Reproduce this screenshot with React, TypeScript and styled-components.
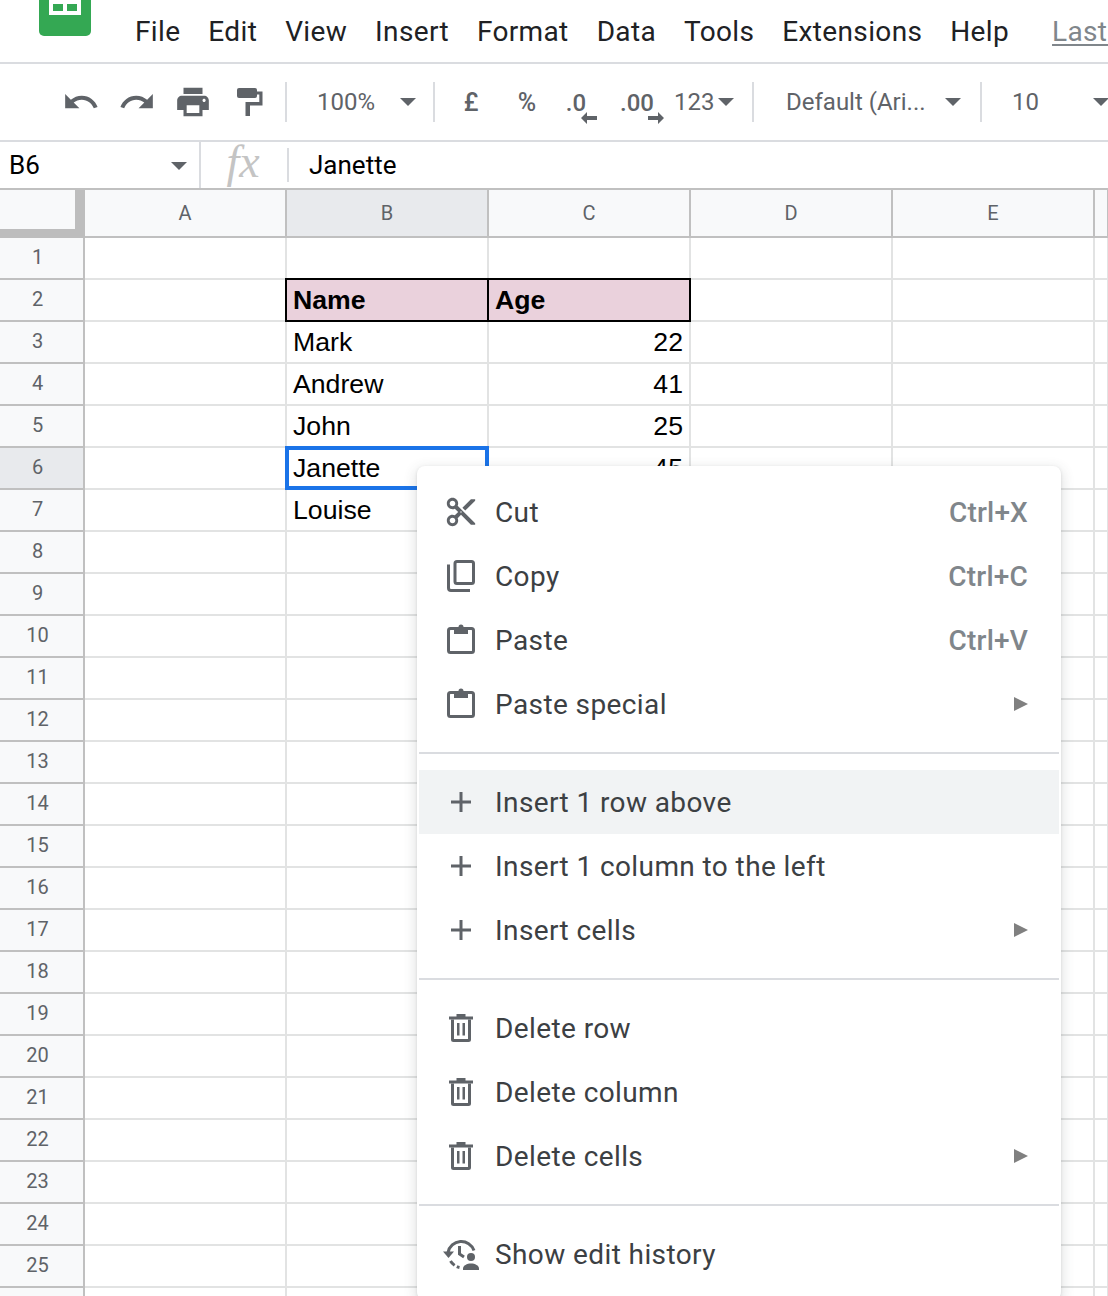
import React from "react";
import styled, { createGlobalStyle } from "styled-components";

const GlobalStyle = createGlobalStyle`
   html, body { margin: 0; padding: 0; background: #fff; }
   body { font-family: Roboto, "Liberation Sans", sans-serif; }
`;

const ICON = "#5f6368";
const GRID_LINE = "#e2e3e3";
const HEAD_LINE = "#c0c0c0";

const Page = styled.div`
   width: 1108px;
   height: 1296px;
   position: relative;
   overflow: hidden;
   background: #fff;
`;

/* top menu bar */
const MenuBar = styled.div`
   height: 62px;
   display: flex;
   align-items: flex-start;
   padding-left: 39px;
   border-bottom: 2px solid #dadce0;
   white-space: nowrap;
`;

const Logo = styled.svg`
   width: 52px;
   height: 36px;
   flex: none;
   margin-right: 44px;
`;

const MenuLabels = styled.div`
   display: flex;
   gap: 28px;
   padding-top: 15px;
`;

const MenuLabel = styled.span`
   font-size: 28px;
   line-height: 34px;
   letter-spacing: 0.35px;
   color: #202124;
`;

const LastEdit = styled(MenuLabel)`
   color: #80868b;
   text-decoration: underline;
   text-underline-offset: 3px;
   margin-left: 15px;
`;

/* toolbar */
const Toolbar = styled.div`
   height: 76px;
   display: flex;
   align-items: center;
   padding-left: 52px;
   border-bottom: 2px solid #dadce0;
   white-space: nowrap;
   color: ${ICON};
   font-size: 24px;
`;

const ToolButton = styled.div<{ $w: number; $strong?: boolean }>`
   width: ${({ $w }) => $w}px;
   height: 40px;
   flex: none;
   display: flex;
   align-items: center;
   justify-content: center;
   ${({ $strong }) => $strong && "font-weight: 500; font-size: 25px;"}
`;

const ToolSep = styled.div<{ $first?: boolean }>`
   width: 2px;
   height: 40px;
   flex: none;
   background: #dadce0;
   margin-left: ${({ $first }) => ($first ? "6px" : "0")};
`;

const Dropdown = styled.div<{ $w: number; $pad: number; $gap: number }>`
   width: ${({ $w }) => $w}px;
   flex: none;
   display: flex;
   align-items: center;
   justify-content: space-between;
   box-sizing: border-box;
   padding: 0 ${({ $gap }) => $gap}px 0 ${({ $pad }) => $pad}px;
   line-height: 26px;
   margin-top: -1px;
`;

const Caret = styled.span`
   width: 0;
   height: 0;
   flex: none;
   margin-top: 1px;
   border-left: 8px solid transparent;
   border-right: 8px solid transparent;
   border-top: 8px solid ${ICON};
`;

const Decimal = styled.div`
   display: flex;
   flex-direction: column;
   font-weight: 500;
   line-height: 26px;
   padding-top: 10px;
`;

const DecimalArrow = styled.svg<{ $side: "left" | "right" }>`
   width: 16px;
   height: 12px;
   margin-top: -4px;
   align-self: flex-end;
   margin-right: ${({ $side }) => ($side === "left" ? "-11px" : "-10px")};
`;

/* formula bar */
const FormulaBar = styled.div`
   height: 46px;
   display: flex;
   align-items: center;
   white-space: nowrap;
   font-size: 26px;
   color: #000;
`;

const NameBox = styled.div`
   width: 201px;
   height: 46px;
   flex: none;
   box-sizing: border-box;
   padding: 0 12px 0 9px;
   display: flex;
   align-items: center;
   justify-content: space-between;
   border-right: 2px solid #dadce0;
`;

const FxLabel = styled.div`
   width: 86px;
   flex: none;
   box-sizing: border-box;
   padding: 0 2px 6px 0;
   text-align: center;
   font-family: "Liberation Serif", serif;
   font-style: italic;
   font-size: 46px;
   line-height: 40px;
   color: #c4c4c4;
`;

const FormulaSep = styled.div`
   width: 2px;
   height: 34px;
   flex: none;
   background: #dadce0;
   margin-right: 20px;
`;

/* sheet */
const Sheet = styled.div`
   display: grid;
   grid-template-columns: 85px repeat(5, 202px) 1fr;
   grid-template-rows: 48px;
   grid-auto-rows: 42px;
   border-top: 2px solid ${HEAD_LINE};
`;

const Corner = styled.div`
   background: #f8f9fa;
   border-right: 10px solid #bdbdbd;
   border-bottom: 9px solid #bdbdbd;
`;

const ColHead = styled.div<{ $active?: boolean }>`
   display: flex;
   align-items: center;
   justify-content: center;
   background: ${({ $active }) => ($active ? "#e8eaed" : "#f8f9fa")};
   border-right: 2px solid ${HEAD_LINE};
   border-bottom: 2px solid ${HEAD_LINE};
   font-size: 20px;
   color: ${ICON};
`;

const RowHead = styled.div<{ $active?: boolean }>`
   display: flex;
   align-items: center;
   justify-content: center;
   padding: 0 8px 2px 0;
   background: ${({ $active }) => ($active ? "#e8eaed" : "#f8f9fa")};
   border-right: 2px solid ${HEAD_LINE};
   border-bottom: 2px solid ${HEAD_LINE};
   font-size: 20px;
   color: ${ICON};
`;

const Cell = styled.div<{
   $right?: boolean;
   $head?: boolean;
   $selected?: boolean;
}>`
   position: relative;
   display: flex;
   align-items: flex-end;
   justify-content: ${({ $right }) => ($right ? "flex-end" : "flex-start")};
   padding: 0 6px 5px;
   overflow: visible;
   white-space: nowrap;
   background: ${({ $head }) => ($head ? "#ead1dc" : "#fff")};
   border-right: 2px solid ${GRID_LINE};
   border-bottom: 2px solid ${GRID_LINE};
   font-family: "Liberation Sans", Arial, sans-serif;
   font-size: 26.67px;
   line-height: 30px;
   font-weight: ${({ $head }) => ($head ? 700 : 400)};
   color: #000;

   ${({ $head }) =>
      $head &&
      `&::after {
         content: "";
         position: absolute;
         inset: -2px;
         border: 2px solid #000;
         pointer-events: none;
      }`}

   ${({ $selected }) =>
      $selected &&
      `&::after {
         content: "";
         position: absolute;
         inset: -2px;
         border: 4px solid #1a73e8;
         pointer-events: none;
      }`}
`;

/* context menu */
const ContextMenu = styled.div`
   position: absolute;
   top: 466px;
   left: 417px;
   width: 640px;
   padding: 14px 2px;
   background: #fff;
   border-radius: 8px;
   box-shadow: 0 1px 3px rgba(60, 64, 67, 0.15), 0 4px 12px 3px rgba(60, 64, 67, 0.12);
`;

const MenuItem = styled.div<{ $hover?: boolean }>`
   height: 64px;
   display: flex;
   align-items: center;
   padding-right: 31px;
   background: ${({ $hover }) => ($hover ? "#f1f3f4" : "transparent")};
`;

const ItemIcon = styled.div`
   width: 76px;
   flex: none;
   display: flex;
   justify-content: center;
   padding-left: 8px;
   box-sizing: border-box;
   color: ${ICON};
   svg { display: block; }
`;

const ItemLabel = styled.span`
   flex: 1;
   font-size: 28px;
   letter-spacing: 0.4px;
   color: #3c4043;
`;

const Shortcut = styled.span`
   font-size: 28px;
   font-weight: 500;
   letter-spacing: 0.2px;
   color: #80868b;
`;

const SubArrow = styled.span`
   width: 0;
   height: 0;
   border-top: 7px solid transparent;
   border-bottom: 7px solid transparent;
   border-left: 14px solid #808080;
`;

const MenuDivider = styled.div`
   height: 2px;
   margin: 16px 0;
   background: #dadce0;
`;

const PasteSvg = styled.svg`
   margin-top: -3px;
`;

/* icons */
function MdIcon({ d, size = 38 }: { d: string; size?: number }) {
   return (
      <svg width={size} height={size} viewBox="0 0 24 24" fill={ICON}>
         <path d={d} />
      </svg>
   );
}

function PaintIcon() {
   return (
      <svg width="26" height="28" viewBox="0 0 26 28" fill={ICON}>
         <rect x="0" y="0" width="20" height="10" rx="2" />
         <path d="M19 3.5h6.5V17.500H13V28H8.500V14H22.300V6.500H19z" />
      </svg>
   );
}

function CopyIcon() {
   return (
      <svg width="28" height="32" viewBox="0 0 28 32" fill="none" stroke={ICON} strokeWidth="3">
         <rect x="8" y="1.500" width="18.500" height="22" rx="2" />
         <path d="M1.500 4.500V28a2.500 2.500 0 0 0 2.500 2.500H23" />
      </svg>
   );
}

function PasteIcon() {
   return (
      <PasteSvg width="28" height="30" viewBox="0 0 28 30" fill="none">
         <rect x="1.500" y="4.500" width="25" height="24" rx="2" stroke={ICON} strokeWidth="3" />
         <path d="M7 3h4.500a2.500 2.500 0 0 1 5 0H21v7H7z" fill={ICON} />
      </PasteSvg>
   );
}

function PlusIcon() {
   return (
      <svg width="20" height="20" viewBox="0 0 20 20" fill={ICON}>
         <path d="M8.500 0h3v8.500H20v3h-8.500V20h-3v-8.500H0v-3h8.500z" />
      </svg>
   );
}

function TrashIcon() {
   return (
      <svg width="24" height="28" viewBox="0 0 24 28" fill={ICON}>
         <path d="M7.500 0h9v2.500H24v3H0v-3h7.500z" />
         <path d="M2 5.500h3V25h14V5.500h3V25.500a2.500 2.500 0 0 1-2.500 2.500h-15A2.500 2.500 0 0 1 2 25.500z" />
         <rect x="8" y="9" width="2.500" height="12.500" />
         <rect x="13.500" y="9" width="2.500" height="12.500" />
      </svg>
   );
}

function HistoryIcon() {
   return (
      <svg width="36" height="32" viewBox="0 0 36 32" fill="none">
         <path d="M5 14.500A13.500 13.500 0 0 1 31 12.500" stroke={ICON} strokeWidth="3" />
         <path d="M0 13.500l5.500 6.500 5.500-6.500z" fill={ICON} />
         <path d="M7.500 23a14 14 0 0 0 9 6.500" stroke={ICON} strokeWidth="3" strokeDasharray="6 2.500" />
         <path d="M16.500 8v8l4.500 3" stroke={ICON} strokeWidth="3" />
         <circle cx="28" cy="19" r="4" fill={ICON} />
         <path d="M20 32v-1.500c0-3 4-5 8-5s8 2 8 5V32z" fill={ICON} />
      </svg>
   );
}

const P = {
   undo: "M12.5 8c-2.65 0-5.05.99-6.9 2.6L2 7v9h9l-3.62-3.62c1.39-1.16 3.16-1.88 5.12-1.88 3.54 0 6.55 2.31 7.6 5.5l2.37-.78C21.08 11.03 17.15 8 12.5 8z",
   redo: "M18.4 10.6C16.55 8.99 14.15 8 11.5 8c-4.65 0-8.58 3.03-9.96 7.22L3.9 16c1.05-3.19 4.05-5.5 7.6-5.5 1.95 0 3.73.72 5.12 1.88L13 16h9V7l-3.6 3.6z",
   print: "M19 8H5c-1.66 0-3 1.34-3 3v6h4v4h12v-4h4v-6c0-1.66-1.34-3-3-3zm-3 11H8v-5h8v5zm3-7c-.55 0-1-.45-1-1s.45-1 1-1 1 .45 1 1-.45 1-1 1zm-1-9H6v4h12V3z",
   cut: "M9.64 7.64c.23-.5.36-1.05.36-1.64 0-2.21-1.79-4-4-4S2 3.79 2 6s1.79 4 4 4c.59 0 1.14-.13 1.64-.36L10 12l-2.36 2.36C7.14 14.13 6.59 14 6 14c-2.21 0-4 1.79-4 4s1.79 4 4 4 4-1.79 4-4c0-.59-.13-1.14-.36-1.64L12 14l7 7h3v-1L9.64 7.64zM6 8c-1.1 0-2-.89-2-2s.9-2 2-2 2 .89 2 2-.9 2-2 2zm0 12c-1.1 0-2-.89-2-2s.9-2 2-2 2 .89 2 2-.9 2-2 2zm6-7.5c-.28 0-.5-.22-.5-.5s.22-.5.5-.5.5.22.5.5-.22.5-.5.5zM19 3l-6 6 2 2 7-7V3h-3z",
};

const MENUS = ["File", "Edit", "View", "Insert", "Format", "Data", "Tools", "Extensions", "Help"];
const COLS = ["A", "B", "C", "D", "E", ""];
const ROW_COUNT = 26;

// only rows 2-7 hold anything, keyed by row number: [col B, col C]
const DATA: Record<number, [string, string]> = {
   2: ["Name", "Age"],
   3: ["Mark", "22"],
   4: ["Andrew", "41"],
   5: ["John", "25"],
   6: ["Janette", "45"],
   7: ["Louise", ""],
};

function SheetRow({ row }: { row: number }) {
   const values = DATA[row];
   const isHead = row === 2;
   return (
      <>
         <RowHead $active={row === 6}>{row}</RowHead>
         <Cell />
         <Cell $head={isHead} $selected={row === 6}>{values?.[0]}</Cell>
         <Cell $head={isHead} $right={!isHead}>{values?.[1]}</Cell>
         <Cell />
         <Cell />
         <Cell />
      </>
   );
}

function Item({ icon, label, shortcut, sub, hover }: {
   icon: React.ReactNode;
   label: string;
   shortcut?: string;
   sub?: boolean;
   hover?: boolean;
}) {
   return (
      <MenuItem $hover={hover}>
         <ItemIcon>{icon}</ItemIcon>
         <ItemLabel>{label}</ItemLabel>
         {shortcut && <Shortcut>{shortcut}</Shortcut>}
         {sub && <SubArrow />}
      </MenuItem>
   );
}

export default function App() {
   return (
      <Page>
         <GlobalStyle />

         <MenuBar>
            <Logo viewBox="0 0 52 36">
               <path d="M0 0h52v31a5 5 0 0 1-5 5H5a5 5 0 0 1-5-5z" fill="#34a853" />
               <rect x="10" y="0" width="32" height="15" fill="#fff" />
               <rect x="14" y="4" width="10" height="7" fill="#34a853" />
               <rect x="28" y="4" width="10" height="7" fill="#34a853" />
            </Logo>
            <MenuLabels>
               {MENUS.map(m => <MenuLabel key={m}>{m}</MenuLabel>)}
               <LastEdit>Last edit was seconds ago</LastEdit>
            </MenuLabels>
         </MenuBar>

         <Toolbar>
            <ToolButton $w={57}><MdIcon d={P.undo} /></ToolButton>
            <ToolButton $w={56}><MdIcon d={P.redo} /></ToolButton>
            <ToolButton $w={56}><MdIcon d={P.print} /></ToolButton>
            <ToolButton $w={58}><PaintIcon /></ToolButton>
            <ToolSep $first />
            <Dropdown $w={146} $pad={30} $gap={17}>100%<Caret /></Dropdown>
            <ToolSep />
            <ToolButton $w={72} $strong>£</ToolButton>
            <ToolButton $w={40} $strong>%</ToolButton>
            <ToolButton $w={58}>
               <Decimal>
                  .0
                  <DecimalArrow $side="left" viewBox="0 0 16 12" fill={ICON}>
                     <path d="M6 0v4h10v4H6v4L0 6z" />
                  </DecimalArrow>
               </Decimal>
            </ToolButton>
            <ToolButton $w={64}>
               <Decimal>
                  .00
                  <DecimalArrow $side="right" viewBox="0 0 16 12" fill={ICON}>
                     <path d="M10 0v4H0v4h10v4l6-6z" />
                  </DecimalArrow>
               </Decimal>
            </ToolButton>
            <Dropdown $w={83} $pad={5} $gap={18}>123<Caret /></Dropdown>
            <ToolSep />
            <Dropdown $w={226} $pad={32} $gap={19}>Default (Ari...<Caret /></Dropdown>
            <ToolSep />
            <Dropdown $w={140} $pad={30} $gap={13}>10<Caret /></Dropdown>
         </Toolbar>

         <FormulaBar>
            <NameBox>B6<Caret /></NameBox>
            <FxLabel>fx</FxLabel>
            <FormulaSep />
            Janette
         </FormulaBar>

         <Sheet>
            <Corner />
            {COLS.map(c => <ColHead key={c} $active={c === "B"}>{c}</ColHead>)}
            {Array.from({ length: ROW_COUNT }, (_, i) => <SheetRow key={i} row={i + 1} />)}
         </Sheet>

         <ContextMenu>
            <Item icon={<MdIcon d={P.cut} size={34} />} label="Cut" shortcut="Ctrl+X" />
            <Item icon={<CopyIcon />} label="Copy" shortcut="Ctrl+C" />
            <Item icon={<PasteIcon />} label="Paste" shortcut="Ctrl+V" />
            <Item icon={<PasteIcon />} label="Paste special" sub />
            <MenuDivider />
            <Item icon={<PlusIcon />} label="Insert 1 row above" hover />
            <Item icon={<PlusIcon />} label="Insert 1 column to the left" />
            <Item icon={<PlusIcon />} label="Insert cells" sub />
            <MenuDivider />
            <Item icon={<TrashIcon />} label="Delete row" />
            <Item icon={<TrashIcon />} label="Delete column" />
            <Item icon={<TrashIcon />} label="Delete cells" sub />
            <MenuDivider />
            <Item icon={<HistoryIcon />} label="Show edit history" />
         </ContextMenu>
      </Page>
   );
}
